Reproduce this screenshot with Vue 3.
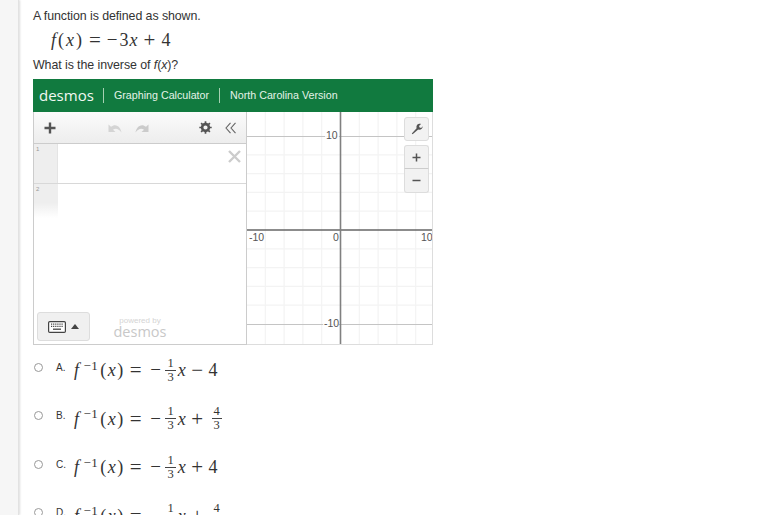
<template>
  <div class="page">
    <div class="rail"></div>
    <main class="content">
      <p class="line first">A function is defined as shown.</p>
      <div class="math define">
        <i>f</i><span class="paren">(</span><i>x</i><span class="paren">)</span>
        <span class="op">=</span><span class="minus">−</span><span>3</span><i>x</i><span class="op">+</span><span>4</span>
      </div>
      <p class="line second">What is the inverse of <i>f</i>(<i>x</i>)?</p>

      <section class="calc">
        <header class="calc-head">
          <span class="logo">desmos</span>
          <span class="head-link">Graphing Calculator</span>
          <span class="head-link">North Carolina Version</span>
        </header>
        <div class="calc-body">
          <div class="panel">
            <div class="toolbar">
              <svg class="ico-plus" width="12" height="12" viewBox="0 0 12 12"><path d="M6 0.5v11M0.5 6h11" stroke="#555" stroke-width="2.4" fill="none" /></svg>
              <div class="undo-redo">
                <svg width="15" height="10" viewBox="0 0 15 10"><path d="M0.5 1.5V9H7.5L5 6.8C7.5 4.8 10.5 5.5 13.5 9.5 13 4.5 8 -0.5 3 3.8z" fill="#d4d4d4" /></svg>
                <svg width="15" height="10" viewBox="0 0 15 10"><path d="M14.5 1.5V9H7.5L10 6.8C7.5 4.8 4.5 5.5 1.5 9.5 2 4.5 7 -0.5 12 3.8z" fill="#cbcbcb" /></svg>
              </div>
              <svg class="ico-gear" width="13" height="13" viewBox="0 0 13 13">
                <circle cx="6.5" cy="6.5" r="3.4" fill="none" stroke="#555" stroke-width="2.6" />
                <path d="M6.5 0.3v12.4M0.3 6.5h12.4M2.1 2.1l8.8 8.8M10.9 2.1l-8.8 8.8" stroke="#555" stroke-width="1.7" stroke-dasharray="2.2 8 2.2 0" fill="none" />
              </svg>
              <svg class="ico-hide" width="12" height="12" viewBox="0 0 12 12"><path d="M5.5 0.8L1 6l4.5 5.2M10.5 0.8L6 6l4.5 5.2" stroke="#666" stroke-width="1.1" fill="none" /></svg>
            </div>
            <div class="list">
              <div class="expr">
                <div class="gutter">1</div>
                <svg class="ico-x" width="13" height="13" viewBox="0 0 13 13"><path d="M1 1l11 11M12 1L1 12" stroke="#ccc" stroke-width="2.4" fill="none" /></svg>
              </div>
              <div class="expr fade">
                <div class="gutter">2</div>
              </div>
            </div>
            <div class="panel-foot">
              <button class="kbd-btn" type="button">
                <svg width="18" height="12" viewBox="0 0 18 12">
                  <rect x="0.6" y="0.6" width="16.8" height="10.8" rx="1.2" fill="#fff" stroke="#444" stroke-width="1.2" />
                  <path d="M3 3.2h12M3 5.4h12" stroke="#444" stroke-width="1.2" stroke-dasharray="1.2 0.9" fill="none" />
                  <path d="M5 8.2h8" stroke="#444" stroke-width="1.3" fill="none" />
                </svg>
                <span class="caret"></span>
              </button>
              <div class="powered">
                <span class="powered-by">powered by</span>
                <span class="powered-logo">desmos</span>
              </div>
            </div>
          </div>

          <div class="graph">
            <svg class="plane" width="186" height="233" viewBox="0 0 186 233">
              <path v-for="x in minorX" :key="'x' + x" :d="`M${x} 0V233`" stroke="#f3f3f3" stroke-width="1.2" />
              <path v-for="y in minorY" :key="'y' + y" :d="`M0 ${y}H186`" stroke="#f3f3f3" stroke-width="1.2" />
              <path d="M0 24.5H186M0 212.5H186" stroke="#c4c4c4" stroke-width="1" />
              <path d="M0 118H186" stroke="#666" stroke-width="1.3" />
              <path d="M93.5 0V233" stroke="#808080" stroke-width="1.6" />
              <g class="tick">
                <rect x="78" y="19" width="14" height="11" fill="#fff" opacity="0.85" />
                <rect x="76" y="206" width="16" height="11" fill="#fff" opacity="0.85" />
                <text x="79" y="27">10</text>
                <text x="77" y="215">-10</text>
                <text x="2" y="129">-10</text>
                <text x="86" y="129">0</text>
                <text x="174" y="129">10</text>
              </g>
            </svg>
            <button class="tool wrench" type="button">
              <svg width="12" height="12" viewBox="0 0 12 12"><path d="M1.6 11.2L0.8 10.4 5.6 5.2C5 3.4 5.8 1.2 8.2 0.8 9 0.7 9.6 0.8 10 1L8 3 8.6 4.6 10.2 5 11.6 3.2C11.8 5.8 9.4 7.4 7.2 6.6z" fill="#555" /></svg>
            </button>
            <div class="zoom-group">
              <button class="tool zoom-btn" type="button">
                <svg width="9" height="9" viewBox="0 0 9 9"><path d="M4.5 0.5v8M0.5 4.5h8" stroke="#555" stroke-width="1.5" fill="none" /></svg>
              </button>
              <button class="tool zoom-btn" type="button">
                <svg width="9" height="9" viewBox="0 0 9 9"><path d="M0.5 4.5h8" stroke="#555" stroke-width="1.5" fill="none" /></svg>
              </button>
            </div>
          </div>
        </div>
      </section>

      <ul class="choices">
        <li v-for="c in choices" :key="c.letter" class="choice">
          <span class="radio"></span>
          <span class="letter">{{ c.letter }}.</span>
          <div class="math answer">
            <i class="fn">f</i><sup>−1</sup><span class="paren">(</span><i>x</i><span class="paren">)</span>
            <span class="op">=</span><span class="minus">−</span>
            <span class="frac"><span>1</span><span>3</span></span><i>x</i>
            <span class="op">{{ c.sign }}</span>
            <span v-if="c.frac" class="frac"><span>4</span><span>3</span></span>
            <span v-else>4</span>
          </div>
        </li>
      </ul>
    </main>
  </div>
</template>

<script setup>
const step = 18.8
const minorX = [-4, -3, -2, -1, 1, 2, 3, 4].map(n => +(93.5 + n * step).toFixed(1))
const minorY = [-4, -3, -2, -1, 1, 2, 3, 4].map(n => +(118 + n * step).toFixed(1))

const choices = [
  { letter: 'A', sign: '−', frac: false },
  { letter: 'B', sign: '+', frac: true },
  { letter: 'C', sign: '+', frac: false },
  { letter: 'D', sign: '+', frac: true }
]
</script>

<style>
html, body {
  margin: 0;
  height: 100%;
  overflow: hidden;
  background: #fff;
}
</style>

<style scoped>
.page {
  display: flex;
  height: 515px;
  overflow: hidden;
  font-family: "Liberation Sans", Arial, sans-serif;
  color: #333;
}
.rail {
  width: 18px;
  flex: none;
  background: #f6f6f6;
  border-right: 1px solid #e2e2e2;
  box-shadow: 1px 0 2px #ddd;
}
.content {
  padding-left: 14px;
  width: 400px;
}
.line {
  margin: 0;
  font-size: 12.4px;
  line-height: 14px;
  letter-spacing: -0.08px;
}
.first { margin-top: 9px; }
.second { margin-top: 8px; }
.math {
  font-family: "Liberation Serif", "DejaVu Serif", serif;
  color: #333;
  display: flex;
  align-items: center;
}
.define {
  margin: 7px 0 0 18px;
  height: 20px;
  font-size: 18px;
  line-height: 20px;
  letter-spacing: 1px;
}
.define .op { margin: 0 5px; font-size: 21px; }
.minus { font-size: 19px; margin-right: 1px; }
.paren { margin: 0 1px; }

.calc {
  width: 400px;
  margin-top: 7px;
}
.calc-head {
  height: 33px;
  background: #117a3f;
  display: flex;
  align-items: center;
  padding-left: 6px;
  color: #e4f3e8;
}
.logo {
  font-family: "Open Sans", sans-serif;
  font-size: 15px;
  line-height: 33px;
  width: 64px;
  box-sizing: border-box;
  color: #f1f8f2;
}
.head-link {
  font-size: 10.7px;
  line-height: 15px;
  padding-left: 10px;
  padding-right: 10px;
  border-left: 1px solid #a6d0b2;
}
.calc-body {
  display: flex;
  height: 233px;
}
.panel {
  width: 214px;
  box-sizing: border-box;
  border: 1px solid #ccc;
  border-top: 0;
  display: flex;
  flex-direction: column;
}
.toolbar {
  height: 32px;
  box-sizing: border-box;
  border-bottom: 1px solid #ccc;
  background: linear-gradient(#fbfbfb, #ededed);
  display: flex;
  align-items: center;
  padding-left: 10px;
}
.undo-redo {
  display: flex;
  gap: 11px;
  margin-left: 52px;
}
.ico-gear { margin-left: 50px; }
.ico-hide { margin-left: 13px; }
.list {
  flex: 1;
  min-height: 0;
}
.expr {
  height: 39px;
  display: flex;
  position: relative;
  border-bottom: 1px solid #d8d8d8;
}
.gutter {
  width: 24px;
  background: #eee;
  border-right: 1px solid #e4e4e4;
  font-size: 6px;
  line-height: 10px;
  padding-left: 2px;
  box-sizing: border-box;
  color: #999;
}
.fade { border-bottom: 0; }
.fade .gutter {
  border-right: 0;
  height: 34px;
  background: linear-gradient(#eee 55%, #fff);
}
.ico-x {
  position: absolute;
  right: 5px;
  top: 6px;
}
.panel-foot {
  height: 37px;
  box-sizing: border-box;
  padding: 5px 0 0 3px;
  display: flex;
  align-items: flex-start;
}
.kbd-btn {
  width: 53px;
  height: 29px;
  padding: 0 0 0 10px;
  box-sizing: border-box;
  border: 1px solid #ddd;
  border-radius: 3px;
  background: #f0f0f0;
  display: flex;
  align-items: center;
  gap: 5px;
}
.caret {
  width: 0;
  height: 0;
  border-left: 4px solid transparent;
  border-right: 4px solid transparent;
  border-bottom: 5px solid #444;
}
.powered {
  margin-left: 23px;
  margin-top: 5px;
  width: 54px;
  text-align: center;
  color: #d4d4d4;
  display: flex;
  flex-direction: column;
}
.powered-by {
  font-size: 8px;
  line-height: 8px;
}
.powered-logo {
  font-family: "Open Sans", sans-serif;
  font-size: 14.5px;
  line-height: 14px;
  color: #c8c8c8;
}
.graph {
  width: 186px;
  position: relative;
  border-right: 1px solid #ddd;
  border-bottom: 1px solid #ddd;
  box-sizing: border-box;
  overflow: hidden;
}
.plane { display: block; }
.tick text {
  font-family: "Liberation Sans", sans-serif;
  font-size: 10.5px;
  fill: #555;
}
.tool {
  position: absolute;
  padding: 0;
  width: 25px;
  background: #f2f2f2;
  border: 1px solid #ddd;
  border-radius: 3px;
  display: flex;
  align-items: center;
  justify-content: center;
}
.wrench {
  left: 157px;
  top: 5px;
  height: 24px;
}
.zoom-group {
  position: absolute;
  left: 157px;
  top: 33px;
  width: 25px;
  height: 48px;
}
.zoom-btn {
  position: static;
  height: 24px;
}
.zoom-btn:first-child {
  border-bottom: 1px solid #ccc;
  border-radius: 3px 3px 0 0;
}
.zoom-btn:last-child {
  border-top: 0;
  border-radius: 0 0 3px 3px;
}
.choices {
  list-style: none;
  margin: -2px 0 0;
  padding: 0;
}
.choice {
  display: flex;
  align-items: center;
  height: 48.5px;
  position: relative;
}
.radio {
  width: 7px;
  height: 7px;
  border: 1px solid #999;
  border-radius: 50%;
  margin-left: 1px;
  flex: none;
}
.letter {
  font-size: 10px;
  width: 18px;
  margin-left: 13px;
  flex: none;
}
.answer {
  font-size: 18px;
  line-height: 20px;
  margin-top: 6px;
  letter-spacing: 0.5px;
}
.answer .fn { margin-right: 3px; }
.answer sup {
  font-size: 13px;
  line-height: 13px;
  align-self: flex-start;
  margin: 2px 1px 0 1px;
}
.answer .op { margin: 0 5px; font-size: 21px; }
.answer .minus { margin-left: 3px; }
.frac {
  display: inline-flex;
  flex-direction: column;
  align-items: center;
  font-size: 12.5px;
  line-height: 13px;
  margin: 0 2px 0 3px;
  letter-spacing: 0;
}
.frac span:first-child {
  border-bottom: 1px solid #444;
  padding: 0 2px;
}
</style>
